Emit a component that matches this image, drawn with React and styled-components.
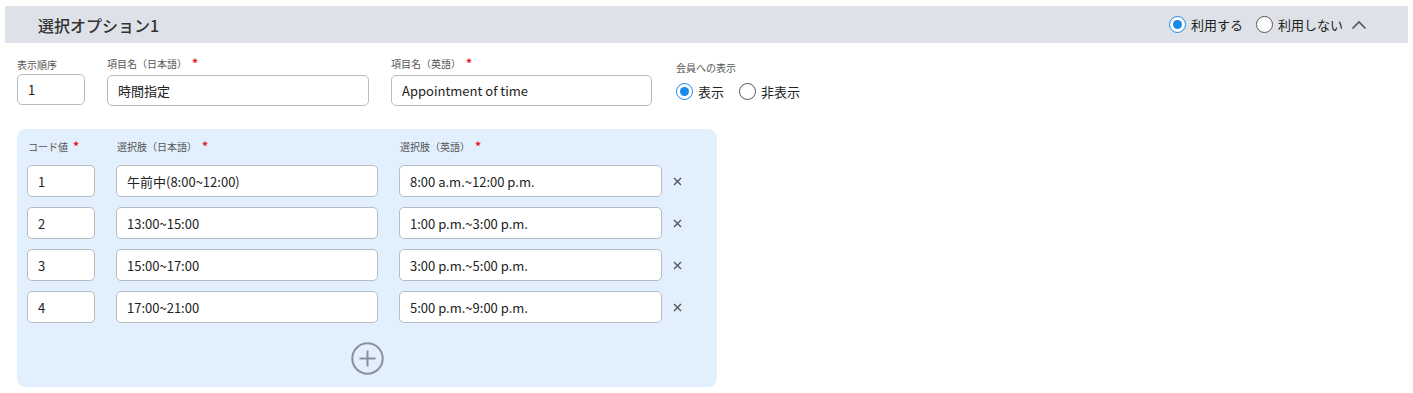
import React from "react";
import styled, { createGlobalStyle } from "styled-components";

const Global = createGlobalStyle`
  body { margin: 0; background: #fff; font-family: "Noto Sans CJK JP", "Noto Sans", sans-serif; color: #222; }
  * { box-sizing: border-box; }
`;

const Page = styled.div`
  padding: 6px 5px;
  width: 1413px;
`;

const Header = styled.div`
  height: 37px;
  background: #dfe1e8;
  display: flex;
  align-items: center;
  justify-content: space-between;
  padding: 0 41px 0 33px;
`;

const Title = styled.h2`
  margin: 0;
  font-size: 16px;
  font-weight: 500;
  color: #333;
`;

const HeaderRight = styled.div`
  display: flex;
  align-items: center;
  gap: 13px;
`;

const RadioLabel = styled.label`
  display: inline-flex;
  align-items: center;
  gap: 5px;
  font-size: 13px;
  color: #222;
  cursor: pointer;
`;

const RadioCircle = styled.span`
  width: 17px;
  height: 17px;
  border-radius: 50%;
  border: ${(p) => (p.$checked ? "1.6px solid #1a88e8" : "1.4px solid #555")};
  background: #fff;
  display: inline-flex;
  align-items: center;
  justify-content: center;
  &::after {
    content: "";
    width: 9px;
    height: 9px;
    border-radius: 50%;
    background: ${(p) => (p.$checked ? "#1a88e8" : "transparent")};
  }
`;

const Chevron = styled.svg`
  margin-left: -5px;
`;

const Radio = ({ checked, children }) => (
  <RadioLabel>
    <RadioCircle $checked={checked} />
    {children}
  </RadioLabel>
);

const FormRow = styled.div`
  display: flex;
  padding: 13px 0 0 12px;
  gap: 22px;
`;

const Field = styled.div`
  display: flex;
  flex-direction: column;
  gap: ${(p) => p.$gap || 3}px;
  width: ${(p) => p.$w}px;
  margin-left: ${(p) => p.$ml || 0}px;
  padding-top: ${(p) => p.$pt || 0}px;
`;

const Label = styled.div`
  font-size: 10px;
  line-height: 14px;
  color: #555;
  white-space: nowrap;
`;

const Req = styled.span`
  color: #e8141b;
  margin-left: 5px;
  font-size: 12px;
  font-weight: 700;
`;

const Input = styled.input`
  width: 100%;
  height: ${(p) => p.$h || 31}px;
  border: 1px solid #b9bcc0;
  border-radius: 5px;
  padding: 0 10px;
  font-family: inherit;
  font-size: 13px;
  color: #222;
  background: #fff;
  outline: none;
`;

const RadioGroup = styled.div`
  display: flex;
  gap: 15px;
  height: 31px;
  align-items: center;
`;

const Panel = styled.div`
  margin: 22px 0 0 12px;
  width: 700px;
  background: #e2effc;
  border-radius: 9px;
  padding: 10px 10px 12px;
`;

const Grid = styled.div`
  display: grid;
  grid-template-columns: 68px 262px 263px 32px;
  column-gap: 21px;
  row-gap: 10px;
  align-items: center;
`;

const PanelLabel = styled(Label)`
  margin-left: 1px;
  margin-bottom: 1px;
`;

const RemoveBtn = styled.button`
  border: none;
  background: none;
  padding: 0;
  margin-left: -13px;
  width: 14px;
  height: 14px;
  display: flex;
  align-items: center;
  justify-content: center;
  cursor: pointer;
`;

const AddRow = styled.div`
  display: flex;
  justify-content: center;
  padding-top: 19px;
`;

const AddBtn = styled.button`
  border: none;
  background: none;
  padding: 0;
  width: 33px;
  height: 33px;
  cursor: pointer;
`;

const rows = [
  ["1", "午前中(8:00~12:00)", "8:00 a.m.~12:00 p.m."],
  ["2", "13:00~15:00", "1:00 p.m.~3:00 p.m."],
  ["3", "15:00~17:00", "3:00 p.m.~5:00 p.m."],
  ["4", "17:00~21:00", "5:00 p.m.~9:00 p.m."],
];

export default function App() {
  return (
    <Page>
      <Global />
      <Header>
        <Title>選択オプション1</Title>
        <HeaderRight>
          <Radio checked>利用する</Radio>
          <Radio>利用しない</Radio>
          <Chevron width="16" height="10" viewBox="0 0 16 10">
            <path d="M1.5 8.5 L8 2 L14.5 8.5" fill="none" stroke="#555" strokeWidth="1.6" />
          </Chevron>
        </HeaderRight>
      </Header>

      <FormRow>
        <Field $w={68} $gap={2} $pt={2}>
          <Label>表示順序</Label>
          <Input defaultValue="1" />
        </Field>
        <Field $w={262} $gap={4}>
          <Label>
            項目名（日本語）<Req>*</Req>
          </Label>
          <Input defaultValue="時間指定" />
        </Field>
        <Field $w={261} $gap={4}>
          <Label>
            項目名（英語）<Req>*</Req>
          </Label>
          <Input defaultValue="Appointment of time" />
        </Field>
        <Field $w={200} $ml={2} $pt={5} $gap={1}>
          <Label>会員への表示</Label>
          <RadioGroup>
            <Radio checked>表示</Radio>
            <Radio>非表示</Radio>
          </RadioGroup>
        </Field>
      </FormRow>

      <Panel>
        <Grid>
          <PanelLabel>
            コード値<Req>*</Req>
          </PanelLabel>
          <PanelLabel>
            選択肢（日本語）<Req>*</Req>
          </PanelLabel>
          <PanelLabel>
            選択肢（英語）<Req>*</Req>
          </PanelLabel>
          <span />
          {rows.map(([c, j, e]) => (
            <React.Fragment key={c}>
              <Input $h={32} defaultValue={c} />
              <Input $h={32} defaultValue={j} />
              <Input $h={32} defaultValue={e} />
              <RemoveBtn aria-label="remove">
                <svg width="9" height="9" viewBox="0 0 9 9">
                  <path d="M1 1 L8 8 M8 1 L1 8" stroke="#555" strokeWidth="1.4" />
                </svg>
              </RemoveBtn>
            </React.Fragment>
          ))}
        </Grid>
        <AddRow>
          <AddBtn aria-label="add">
            <svg width="33" height="33" viewBox="0 0 33 33">
              <circle cx="16.5" cy="16.5" r="15.2" fill="none" stroke="#8a9099" strokeWidth="2" />
              <path d="M16.5 8.5 V24.5 M8.5 16.5 H24.5" stroke="#8a9099" strokeWidth="2" />
            </svg>
          </AddBtn>
        </AddRow>
      </Panel>
    </Page>
  );
}
